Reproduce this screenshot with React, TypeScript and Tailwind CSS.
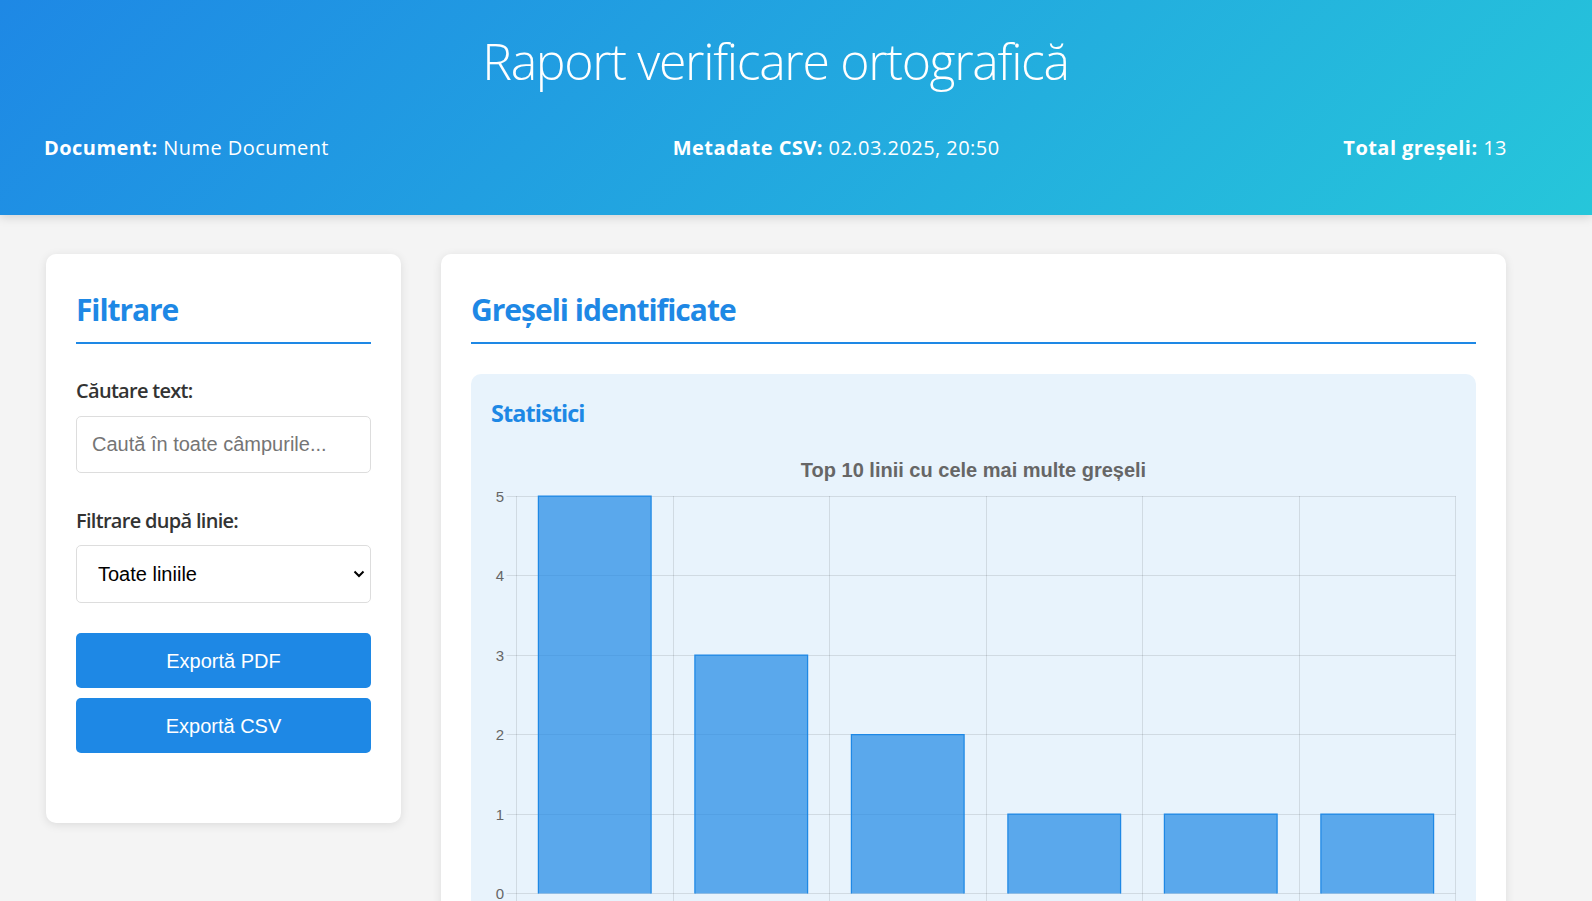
import React from 'react';

interface LineStat {
  label: string;
  count: number;
}

const stats: LineStat[] = [
  { label: 'Linia 4', count: 5 },
  { label: 'Linia 12', count: 3 },
  { label: 'Linia 7', count: 2 },
  { label: 'Linia 1', count: 1 },
  { label: 'Linia 9', count: 1 },
  { label: 'Linia 15', count: 1 },
];

const GRID = 'rgba(0,0,0,0.1)';
const crisp = (v: number) => Math.round(v - 0.5) + 0.5;

const BarChart: React.FC<{ data: LineStat[] }> = ({ data }) => {
  const left = 25.5;
  const right = 964.5;
  const top = 52;
  const base = 449.5;
  const step = (base - top) / 5;
  const cat = (right - left) / data.length;
  const barW = cat * 0.72;
  const ticks = [0, 1, 2, 3, 4, 5];

  return (
    <svg width="965" height="482" className="block">
      <text
        x={482.5}
        y={33}
        textAnchor="middle"
        fontFamily="'Liberation Sans', Arial, sans-serif"
        fontWeight="bold"
        fontSize="20"
        fill="#666"
      >
        Top 10 linii cu cele mai multe greșeli
      </text>

      {ticks.map(t => {
        const y = crisp(base - t * step);
        return (
          <g key={`t-${t}`}>
            <line x1={15.5} x2={right} y1={y} y2={y} stroke={GRID} strokeWidth="1" />
            <text
              x={13}
              y={y + 5}
              textAnchor="end"
              fontFamily="'Liberation Sans', Arial, sans-serif"
              fontSize="15"
              fill="#666"
            >
              {t}
            </text>
          </g>
        );
      })}

      {Array.from({ length: data.length + 1 }).map((_, i) => {
        const x = crisp(left + i * cat);
        return <line key={`v-${i}`} x1={x} x2={x} y1={top} y2={base + 10} stroke={GRID} strokeWidth="1" />;
      })}

      {data.map((d, i) => {
        const x = left + i * cat + (cat - barW) / 2;
        const y = base - d.count * step;
        return (
          <g key={d.label}>
            <rect x={x} y={y} width={barW} height={base - y} fill="rgba(30,136,229,0.7)" />
            <path
              d={`M${x} ${base} L${x} ${y} L${x + barW} ${y} L${x + barW} ${base}`}
              fill="none"
              stroke="#1e88e5"
              strokeWidth="1.25"
            />
            <text
              x={left + i * cat + cat / 2}
              y={base + 28}
              textAnchor="middle"
              fontFamily="'Liberation Sans', Arial, sans-serif"
              fontSize="15"
              fill="#666"
            >
              {d.label}
            </text>
          </g>
        );
      })}
    </svg>
  );
};

const App: React.FC = () => {
  return (
    <div className="min-h-screen bg-[#f4f4f4] text-[#333] font-['Open_Sans','Noto_Sans',sans-serif]">
      <header className="bg-[linear-gradient(135deg,#1e88e5,#26c6da)] text-white shadow-[0_2px_10px_rgba(0,0,0,0.15)] pt-[31px] pb-[52px] pl-[44px] pr-[85px]">
        <h1 className="text-center text-[50px] leading-[60px] font-light tracking-[-1.35px]">Raport verificare ortografică</h1>
        <div className="mt-[42px] flex justify-between text-[20px] leading-[30px] tracking-[0.45px]">
          <div>
            <span className="font-bold">Document:</span> Nume Document
          </div>
          <div>
            <span className="font-bold">Metadate CSV:</span> 02.03.2025, 20:50
          </div>
          <div>
            <span className="font-bold">Total greșeli:</span> 13
          </div>
        </div>
      </header>

      <main className="flex items-start gap-[40px] pt-[39px] pl-[46px] pr-[86px] pb-[40px]">
        <aside className="w-[355px] shrink-0 bg-white rounded-[10px] shadow-[0_2px_10px_rgba(0,0,0,0.1)] p-[30px]">
          <h2 className="mt-[8px] mb-[31px] pb-[14px] border-b-2 border-[#1e88e5] text-[30px] leading-[36px] font-bold text-[#1e88e5] tracking-[-1.1px]">
            Filtrare
          </h2>

          <label className="block pt-[2px] text-[20px] leading-[28px] font-semibold tracking-[-0.7px]">Căutare text:</label>
          <input
            type="text"
            placeholder="Caută în toate câmpurile..."
            className="mt-[11px] w-full h-[57px] px-[15px] border border-[#ddd] rounded-[5px] bg-white text-[20px] font-['Liberation_Sans',Arial,sans-serif] placeholder:text-[#757575] outline-none"
          />

          <label className="block mt-[32px] pt-[2px] text-[20px] leading-[28px] font-semibold tracking-[-0.7px]">Filtrare după linie:</label>
          <div className="relative mt-[10px]">
            <select className="appearance-none w-full h-[58px] pl-[21px] pr-[40px] border border-[#ddd] rounded-[5px] bg-white text-[20px] text-black font-['Liberation_Sans',Arial,sans-serif] outline-none">
              <option>Toate liniile</option>
            </select>
            <svg className="absolute right-[6px] top-[25px] pointer-events-none" width="12" height="8" viewBox="0 0 12 8">
              <polyline points="1.5,1.5 6,6 10.5,1.5" fill="none" stroke="#000" strokeWidth="2" />
            </svg>
          </div>

          <div className="mt-[30px] pb-[40px] flex flex-col gap-[10px] font-['Liberation_Sans',Arial,sans-serif]">
            <button className="h-[55px] w-full rounded-[5px] bg-[#1e88e5] text-white text-[20px]">Exportă PDF</button>
            <button className="h-[55px] w-full rounded-[5px] bg-[#1e88e5] text-white text-[20px]">Exportă CSV</button>
          </div>
        </aside>

        <section className="flex-1 bg-white rounded-[10px] shadow-[0_2px_10px_rgba(0,0,0,0.1)] p-[30px]">
          <h2 className="mt-[8px] mb-[30px] pb-[14px] border-b-2 border-[#1e88e5] text-[30px] leading-[36px] font-bold text-[#1e88e5] tracking-[-1px]">
            Greșeli identificate
          </h2>

          <div className="bg-[#e8f3fc] rounded-[10px] p-[20px]">
            <h3 className="mt-[2px] mb-[13px] text-[23.4px] leading-[35px] font-bold text-[#1e88e5] tracking-[-0.9px]">Statistici</h3>
            <BarChart data={stats} />
          </div>
        </section>
      </main>
    </div>
  );
};

export default App;
